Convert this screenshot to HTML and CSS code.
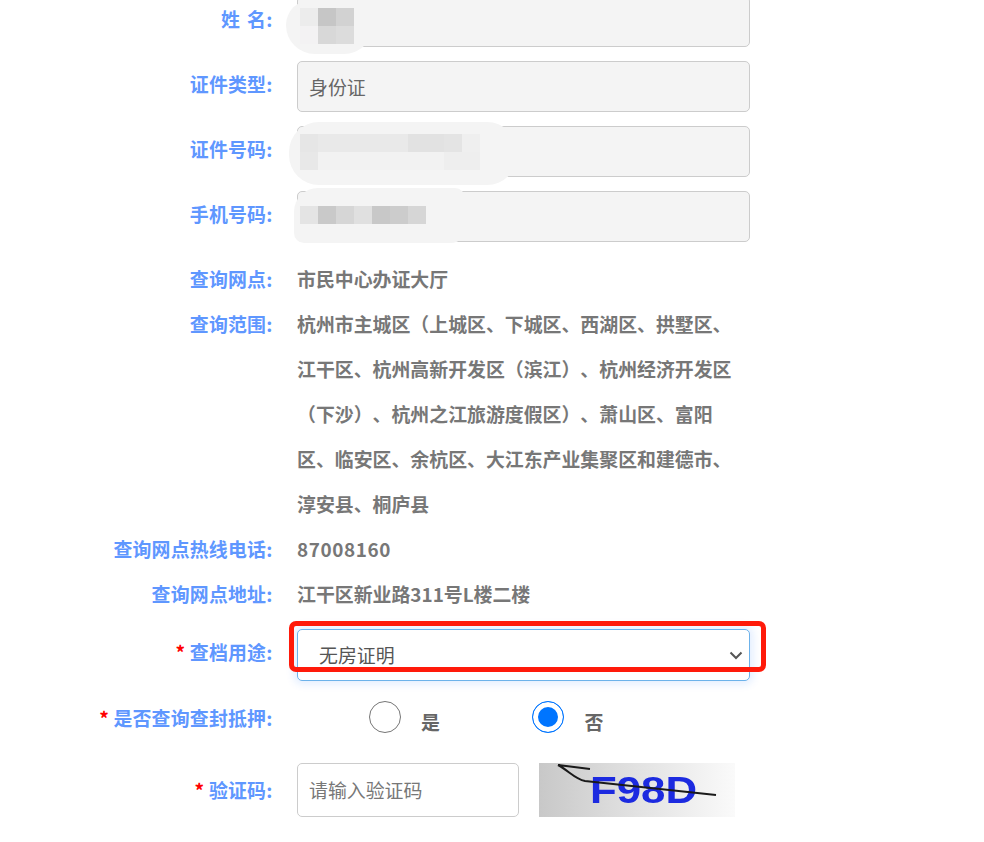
FILE: index.html
```html
<!DOCTYPE html>
<html lang="zh-CN">

<head>
    <meta charset="UTF-8">
    <meta name="viewport" content="width=device-width, initial-scale=1.0">
    <title>查档申请</title>
    <link rel="stylesheet" href="styles.css">
</head>

<body>
    <form class="form">
        <div class="row row-input">
            <label class="label label-name">姓 名:</label>
            <div class="field">
                <input class="input" type="text" readonly>
                <div class="mask mask-name">
                    <div class="cells">
                        <i style="background:#ececec"></i><i style="background:#c6c6c6"></i><i style="background:#d2d2d2"></i>
                    </div>
                    <div class="cells">
                        <i style="background:#f3f2f3"></i><i style="background:#d8d8d8"></i><i style="background:#dcdcdc"></i>
                    </div>
                </div>
            </div>
        </div>
        <div class="row row-input">
            <label class="label">证件类型:</label>
            <div class="field">
                <input class="input" type="text" value="身份证" readonly>
            </div>
        </div>
        <div class="row row-input">
            <label class="label">证件号码:</label>
            <div class="field">
                <input class="input" type="text" readonly>
                <div class="mask mask-id">
                    <div class="cells">
                        <i style="background:#e6e6e6"></i><i class="w5" style="background:#e9e9e9"></i><i class="w2" style="background:#e2e2e2"></i><i style="background:#e4e4e4"></i><i style="background:#efefef"></i>
                    </div>
                    <div class="cells">
                        <i style="background:#e8e8e8"></i><i class="w7" style="background:#f2f2f2"></i><i class="w2" style="background:#eeeeee"></i>
                    </div>
                </div>
            </div>
        </div>
        <div class="row row-input">
            <label class="label">手机号码:</label>
            <div class="field">
                <input class="input" type="text" readonly>
                <div class="mask mask-phone">
                    <div class="cells">
                        <i style="background:#e4e4e4"></i><i style="background:#c9c9c9"></i><i style="background:#d6d6d6"></i><i style="background:#e0e0e0"></i><i style="background:#c8c8c8"></i><i style="background:#cccccc"></i><i style="background:#d6d6d6"></i>
                    </div>
                </div>
            </div>
        </div>

        <div class="row row-text">
            <label class="label">查询网点:</label>
            <div class="value">市民中心办证大厅</div>
        </div>
        <div class="row row-text">
            <label class="label">查询范围:</label>
            <div class="value">杭州市主城区（上城区、下城区、西湖区、拱墅区、江干区、杭州高新开发区（滨江）、杭州经济开发区（下沙）、杭州之江旅游度假区）、萧山区、富阳区、临安区、余杭区、大江东产业集聚区和建德市、淳安县、桐庐县</div>
        </div>
        <div class="row row-text">
            <label class="label">查询网点热线电话:</label>
            <div class="value tel">87008160</div>
        </div>
        <div class="row row-text">
            <label class="label">查询网点地址:</label>
            <div class="value">江干区新业路311号L楼二楼</div>
        </div>

        <div class="row row-select">
            <label class="label"><span class="req">*</span> 查档用途:</label>
            <div class="field">
                <select class="select">
                    <option>无房证明</option>
                </select>
                <svg class="chevron" width="14" height="9" viewBox="0 0 14 9">
                    <path d="M1.5 1.5 L7 7 L12.5 1.5" fill="none" stroke="#555" stroke-width="2"/>
                </svg>
                <div class="highlight"></div>
            </div>
        </div>

        <div class="row row-radio">
            <label class="label"><span class="req">*</span> 是否查询查封抵押:</label>
            <div class="radios">
                <label class="radio"><input type="radio" name="seal"><span>是</span></label>
                <label class="radio"><input type="radio" name="seal" checked><span>否</span></label>
            </div>
        </div>

        <div class="row row-code">
            <label class="label"><span class="req">*</span> 验证码:</label>
            <div class="code">
                <input class="input input-code" type="text" placeholder="请输入验证码">
                <svg class="captcha" width="196" height="54" viewBox="0 0 196 54">
                    <defs>
                        <linearGradient id="captchabg" x1="0" y1="0" x2="1" y2="0">
                            <stop offset="0" stop-color="#c8c8c8"/>
                            <stop offset="0.5" stop-color="#e2e2e2"/>
                            <stop offset="1" stop-color="#fafafa"/>
                        </linearGradient>
                        <filter id="soft"><feGaussianBlur stdDeviation="0.6"/></filter>
                    </defs>
                    <rect width="196" height="54" fill="url(#captchabg)"/>
                    <text class="captcha-text" x="51" y="39.5" textLength="107" lengthAdjust="spacingAndGlyphs" filter="url(#soft)">F98D</text>
                    <path d="M19 2 L51 6 M19 2 C30 8 36 16 46 18 L177 32" fill="none" stroke="#1a1a1a" stroke-width="2"/>
                </svg>
            </div>
        </div>
    </form>
</body>

</html>
```

FILE: styles.css
```css
* {
    box-sizing: border-box;
}

body {
    margin: 0;
    overflow: hidden;
    background-color: white;
    font-family: "Noto Sans CJK SC", "Noto Sans", sans-serif;
    font-size: 18.9px;
    text-spacing-trim: space-all;
    font-feature-settings: "chws" 0;
}

.form {
    margin-top: -4px;
}

.row {
    display: grid;
    grid-template-columns: 272.5px 453px;
    column-gap: 24.5px;
}

.label {
    line-height: 45px;
    text-align: right;
    font-weight: bold;
    letter-spacing: 0.2px;
    color: #5f97ff;
    white-space: nowrap;
}

.label-name {
    word-spacing: 2.5px;
}

.req {
    color: red;
}

.field {
    position: relative;
}

.row-input {
    margin-bottom: 14px;
}

.input {
    display: block;
    width: 100%;
    height: 51px;
    padding: 0 11px;
    border: 1px solid #ccc;
    border-radius: 5px;
    outline: none;
    background-color: #f4f4f4;
    color: #666;
    font: inherit;
}

.input::placeholder {
    color: #777;
}

.row-text .value {
    line-height: 45px;
    font-weight: bold;
    color: #777;
}

.tel {
    letter-spacing: 0.6px;
}

/* mosaics that hide the personal data */
.mask {
    position: absolute;
    background-color: #f4f4f4;
}

.mask-name {
    left: -11px;
    top: 4px;
    width: 87px;
    height: 54px;
    padding: 8px 0 0 14px;
    border-radius: 26px 20px 30px 30px;
}

.mask-id {
    left: -8px;
    top: -4px;
    width: 228px;
    height: 63px;
    padding: 12px 0 0 11px;
    border-radius: 30px;
}

.mask-phone {
    left: -3px;
    top: -3px;
    width: 171px;
    height: 55px;
    padding: 18px 0 0 6px;
    border-radius: 24px 10px 14px 10px;
}

.cells {
    display: flex;
}

.cells i {
    display: block;
    width: 18px;
    height: 18px;
}

.cells .w2 {
    width: 36px;
}

.cells .w5 {
    width: 90px;
}

.cells .w7 {
    width: 126px;
}

.row-select {
    margin-top: 12.5px;
}

.select {
    display: block;
    width: 100%;
    height: 52px;
    padding: 0 36px 0 21px;
    border: 1px solid #6cb2ea;
    border-radius: 5px;
    outline: none;
    appearance: none;
    background-color: white;
    box-shadow: 0 0 8px 3px rgba(13, 110, 253, 0.12);
    color: #555;
    font: inherit;
}

.chevron {
    position: absolute;
    right: 7px;
    top: 22px;
}

.highlight {
    position: absolute;
    left: -8px;
    top: -8px;
    width: 477px;
    height: 51px;
    border: 5px solid #ff1a0a;
    border-radius: 7px;
}

.row-radio {
    margin-top: 14px;
}

.radios {
    display: flex;
    gap: 92.5px;
    padding: 6.5px 0 0 72px;
    height: 45px;
}

.radio {
    display: flex;
    align-items: flex-start;
    gap: 20px;
    height: 32px;
    font-weight: bold;
    line-height: 32px;
    color: #666;
}

.radio span {
    padding-top: 5px;
}

.radio input {
    width: 32px;
    height: 32px;
    margin: 0;
    border: 1px solid #767676;
    border-radius: 50%;
    appearance: none;
    background-color: white;
}

.radio input:checked {
    border: 1.5px solid #0075ff;
    background-color: #0075ff;
    box-shadow: inset 0 0 0 5px white;
}

.row-code {
    margin-top: 23px;
    align-items: center;
}

.code {
    display: flex;
    align-items: center;
    gap: 20px;
}

.input-code {
    width: 222px;
    height: 54px;
    background-color: white;
}

.captcha {
    display: block;
    flex: none;
}

.captcha-text {
    font-family: "Liberation Sans", sans-serif;
    font-size: 36px;
    font-weight: bold;
    fill: #1a2ae0;
}
```
